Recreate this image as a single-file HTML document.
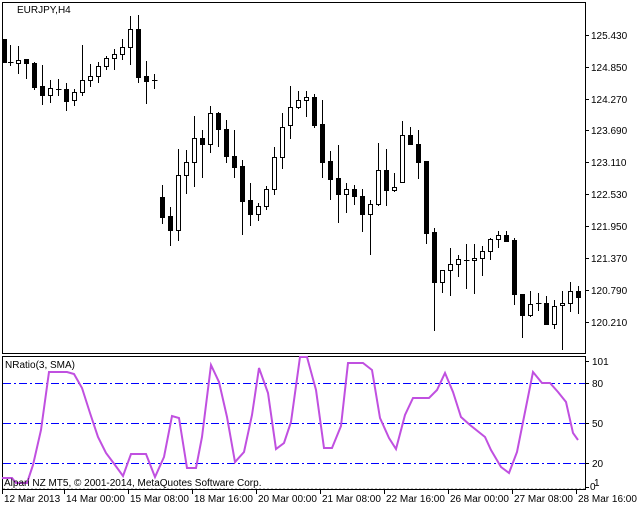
<!DOCTYPE html>
<html><head><meta charset="utf-8"><style>
html,body{margin:0;padding:0;background:#fff;width:638px;height:510px;overflow:hidden}
svg{display:block}
text{font-family:"Liberation Sans",sans-serif;font-size:10px;fill:#000}
</style></head><body>
<svg id="s" width="638" height="510" xmlns="http://www.w3.org/2000/svg" shape-rendering="crispEdges">
<rect x="0" y="0" width="638" height="510" fill="#fff"/>
<rect x="2.5" y="2.5" width="583" height="351" fill="none" stroke="#000"/>
<rect x="2.5" y="356.5" width="583" height="133" fill="none" stroke="#000"/>
<text x="17" y="13">EURJPY,H4</text>
<g id="c"></g>
<g stroke="#000">
<line x1="585" y1="35.5" x2="589" y2="35.5"/><line x1="585" y1="67.5" x2="589" y2="67.5"/>
<line x1="585" y1="99.5" x2="589" y2="99.5"/><line x1="585" y1="130.5" x2="589" y2="130.5"/>
<line x1="585" y1="162.5" x2="589" y2="162.5"/><line x1="585" y1="194.5" x2="589" y2="194.5"/>
<line x1="585" y1="226.5" x2="589" y2="226.5"/><line x1="585" y1="258.5" x2="589" y2="258.5"/>
<line x1="585" y1="290.5" x2="589" y2="290.5"/><line x1="585" y1="322.5" x2="589" y2="322.5"/>
</g>
<text x="591" y="39">125.430</text><text x="591" y="71">124.850</text>
<text x="591" y="103">124.270</text><text x="591" y="134">123.690</text>
<text x="591" y="166">123.110</text><text x="591" y="198">122.530</text>
<text x="591" y="230">121.950</text><text x="591" y="262">121.370</text>
<text x="591" y="294">120.790</text><text x="591" y="326">120.210</text>
<g stroke="#0000ff" stroke-dasharray="8,3,2,3">
<line x1="3" y1="383.5" x2="585" y2="383.5"/>
<line x1="3" y1="423.5" x2="585" y2="423.5"/>
<line x1="3" y1="463.5" x2="585" y2="463.5"/>
</g>
<line x1="3" y1="488.5" x2="585" y2="488.5" stroke="#bbb" stroke-dasharray="2,2"/>
<polyline shape-rendering="auto" fill="none" stroke="#c050e0" stroke-width="2" points="2,478 12,478 16,483 27,483 33,465 41,430 49,372 67,372 74,374 82,388 90,413 98,437 106,453 115,465 123,476 131,454 146,454 155,477 164,457 172,416 179,418 187,468 196,468 202,437 211,365 219,382 227,417 235,462 244,452 252,415 259,368 268,393 276,449 284,443 291,422 300,357 307,357 316,390 324,448 332,448 341,426 348,363 363,363 372,370 380,418 389,438 396,449 405,415 413,398 429,398 437,390 445,373 453,392 461,417 470,425 485,437 491,450 501,467 509,473 517,452 526,407 533,372 542,383 550,383 558,392 566,402 573,433 578,440"/>
<text x="5" y="368">NRatio(3, SMA)</text>
<text x="4" y="486">Alpari NZ MT5, © 2001-2014, MetaQuotes Software Corp.</text>
<g stroke="#000">
<line x1="585" y1="361.5" x2="589" y2="361.5"/><line x1="585" y1="383.5" x2="589" y2="383.5"/>
<line x1="585" y1="423.5" x2="589" y2="423.5"/><line x1="585" y1="463.5" x2="589" y2="463.5"/>
<line x1="585" y1="487.5" x2="589" y2="487.5"/>
</g>
<text x="592" y="365">101</text><text x="592" y="387">80</text><text x="592" y="427">50</text>
<text x="592" y="467">20</text><text x="590" y="490">0</text><text x="594" y="486">1</text>
<g stroke="#000" id="tk"></g>
<text x="4" y="502">12 Mar 2013</text><text x="66" y="502">14 Mar 00:00</text>
<text x="130" y="502">15 Mar 08:00</text><text x="194" y="502">18 Mar 16:00</text>
<text x="258" y="502">20 Mar 00:00</text><text x="322" y="502">21 Mar 08:00</text>
<text x="386" y="502">22 Mar 16:00</text><text x="450" y="502">26 Mar 00:00</text>
<text x="514" y="502">27 Mar 08:00</text><text x="578" y="502">28 Mar 16:00</text>
</svg>
<script>
var d=[[4,39,62,39,62,1],[10,62,62,45,65,2],[18,60,63,46,73,0],[26,59,63,59,78,1],[34,63,87,62,89,1],[42,86,95,65,104,1],[50,88,95,80,102,0],[58,89,89,79,95,2],[66,89,101,83,110,1],[74,92,100,89,105,0],[82,80,92,45,95,0],[90,76,80,64,86,0],[98,66,76,62,82,0],[106,58,66,56,69,0],[114,54,58,49,69,0],[122,47,54,39,59,0],[130,29,47,16,64,0],[138,29,77,15,82,1],[146,76,81,61,103,1],[154,80,80,74,88,2],
[162,197,217,185,223,1],[170,216,230,207,245,1],[178,175,230,149,240,0],[186,162,175,150,193,0],[194,138,162,116,186,0],[202,138,144,130,177,1],[210,113,144,106,152,0],[218,113,129,112,146,1],[226,129,156,120,162,1],[234,156,167,130,177,1],[242,166,201,160,234,1],[250,200,214,183,225,1],[258,206,214,203,220,0],[266,189,206,186,209,0],[274,157,189,147,194,0],[282,127,157,113,168,0],[290,107,125,86,138,0],[298,100,107,91,108,0],[306,97,100,91,116,0],[314,97,125,94,127,1],
[322,124,162,100,177,1],[330,161,179,151,199,1],[338,178,194,145,222,1],[346,189,194,183,212,0],[354,189,196,185,204,1],[362,196,214,189,231,1],[370,204,214,200,254,0],[378,170,204,143,205,0],[386,170,190,149,205,1],[394,187,190,173,191,0],[402,135,182,121,182,0],[410,135,144,127,144,1],[418,144,162,130,178,1],[426,161,233,161,243,1],[434,232,282,228,330,1],[442,270,282,270,292,0],[450,264,270,248,295,0],[458,259,264,255,276,0],[466,260,260,244,288,2],[474,258,260,244,293,0],[482,251,258,246,275,0],[490,239,251,238,259,0],[498,235,239,231,247,0],[506,235,241,231,241,1],[514,240,294,238,304,1],[522,294,315,294,337,1],[530,304,315,291,316,0],[538,303,303,293,310,2],[546,303,324,296,324,1],[554,306,324,300,328,0],[562,303,305,291,349,0],[570,291,303,282,311,0],[578,291,297,286,313,1]];
var ns="http://www.w3.org/2000/svg",g=document.getElementById("c");
function el(t,a){var e=document.createElementNS(ns,t);for(var k in a)e.setAttribute(k,a[k]);g.appendChild(e);}
d.forEach(function(c){var x=c[0]+0.5;
el("line",{x1:x,y1:c[3],x2:x,y2:c[4]+1,stroke:"#000"});
if(c[5]==2){el("line",{x1:x-2.5,y1:c[1]+0.5,x2:x+3,y2:c[1]+0.5,stroke:"#000"});}
else if(c[5]==1){el("rect",{x:x-2.5,y:c[1],width:5,height:Math.max(1,c[2]-c[1]+1),fill:"#000"});}
else{el("rect",{x:x-2,y:c[1]+0.5,width:4,height:Math.max(1,c[2]-c[1]),fill:"#fff",stroke:"#000"});}
});
var t=document.getElementById("tk");[2,64,128,192,256,320,384,448,512,576].forEach(function(x){var e=document.createElementNS(ns,"line");e.setAttribute("x1",x+.5);e.setAttribute("x2",x+.5);e.setAttribute("y1",489);e.setAttribute("y2",494);t.appendChild(e);});
</script>
</body></html>
